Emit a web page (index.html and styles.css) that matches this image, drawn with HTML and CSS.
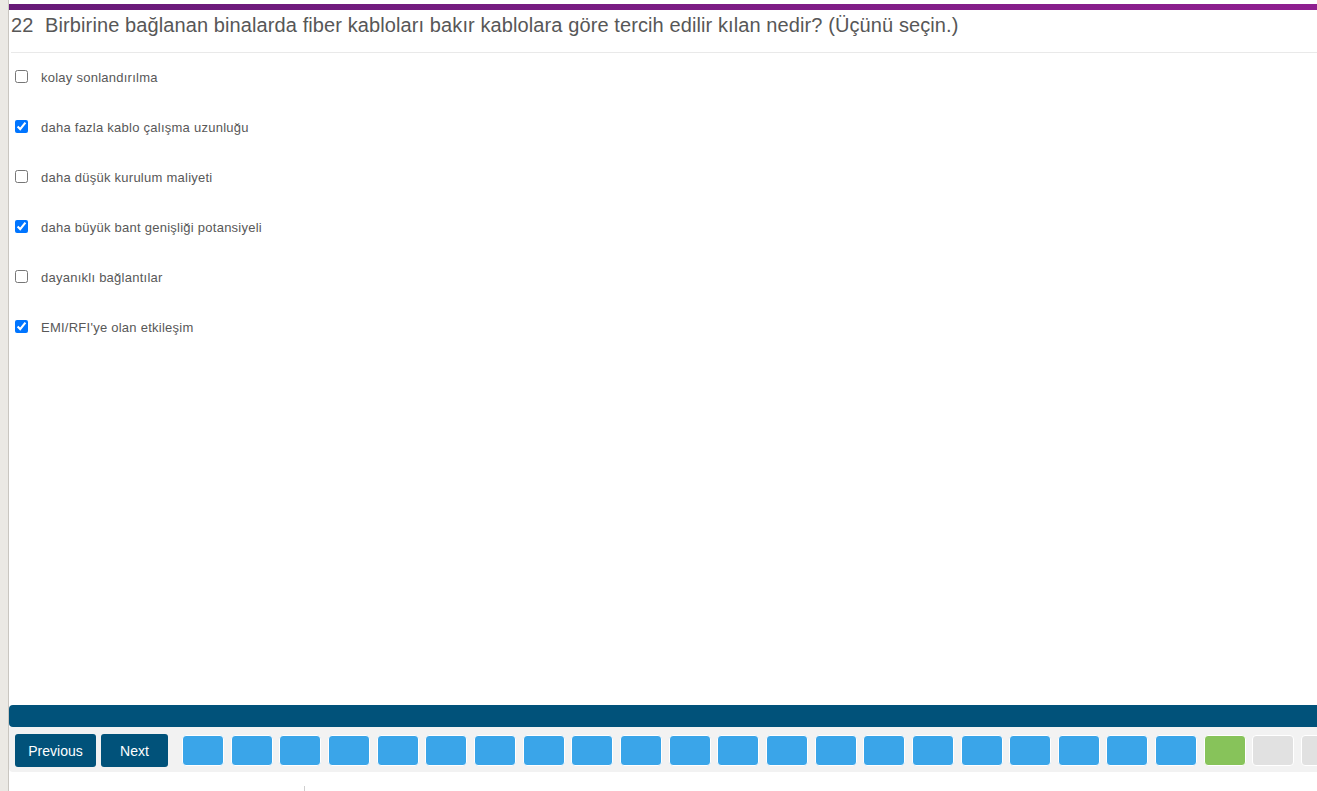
FILE: index.html
```html
<!DOCTYPE html>
<html lang="tr">
<head>
<meta charset="utf-8">
<title>Soru 22</title>
<link rel="stylesheet" href="styles.css">
</head>
<body>
<div class="page">
  <aside class="strip"></aside>
  <main class="main">
    <div class="topbar"></div>
    <div class="question">
      <h1 class="qtitle"><span class="qnum">22</span> Birbirine bağlanan binalarda fiber kabloları bakır kablolara göre tercih edilir kılan nedir? (Üçünü seçin.)</h1>
    </div>
    <div class="options">
      <label class="option"><input type="checkbox"><span class="option-text">kolay sonlandırılma</span></label>
      <label class="option"><input type="checkbox" checked><span class="option-text">daha fazla kablo çalışma uzunluğu</span></label>
      <label class="option"><input type="checkbox"><span class="option-text">daha düşük kurulum maliyeti</span></label>
      <label class="option"><input type="checkbox" checked><span class="option-text">daha büyük bant genişliği potansiyeli</span></label>
      <label class="option"><input type="checkbox"><span class="option-text">dayanıklı bağlantılar</span></label>
      <label class="option"><input type="checkbox" checked><span class="option-text">EMI/RFI'ye olan etkileşim</span></label>
    </div>
    <div class="progress"></div>
    <nav class="nav">
      <button class="nav-btn nav-prev">Previous</button>
      <button class="nav-btn nav-next">Next</button>
      <div class="squares">
        <span class="sq done"></span><span class="sq done"></span><span class="sq done"></span><span class="sq done"></span><span class="sq done"></span><span class="sq done"></span><span class="sq done"></span>
        <span class="sq done"></span><span class="sq done"></span><span class="sq done"></span><span class="sq done"></span><span class="sq done"></span><span class="sq done"></span><span class="sq done"></span>
        <span class="sq done"></span><span class="sq done"></span><span class="sq done"></span><span class="sq done"></span><span class="sq done"></span><span class="sq done"></span><span class="sq done"></span>
        <span class="sq current"></span>
        <span class="sq"></span><span class="sq"></span><span class="sq"></span><span class="sq"></span><span class="sq"></span>
      </div>
    </nav>
    <footer class="footer"><span class="footer-mark"></span></footer>
  </main>
</div>
</body>
</html>
```
FILE: styles.css
```css
html, body {
  margin: 0;
  padding: 0;
  height: 100%;
  background: #ffffff;
}
body {
  font-family: "Liberation Sans", Arial, sans-serif;
  overflow: hidden;
}
.page {
  display: flex;
  height: 100vh;
}
.strip {
  width: 8px;
  flex: 0 0 8px;
  background: #ebe9e4;
  border-right: 1px solid #c9c6c0;
}
.main {
  flex: 1;
  min-width: 0;
  display: flex;
  flex-direction: column;
  overflow: hidden;
}
.topbar {
  margin-top: 4px;
  height: 6px;
  flex: 0 0 6px;
  background: linear-gradient(to right, #671a78, #8f1f90);
}
.question {
  margin-left: 2px;
  border-bottom: 1px solid #e9e9e9;
  padding: 3px 0 15px 0;
}
.qtitle {
  margin: 0;
  font-size: 20px;
  line-height: 24px;
  font-weight: normal;
  color: #575757;
  white-space: nowrap;
  letter-spacing: 0.1px;
}
.qnum {
  margin-right: 6px;
}
.options {
  flex: 1;
  margin-left: 2px;
  padding-top: 14px;
  display: flex;
  flex-direction: column;
}
.option {
  display: flex;
  align-items: center;
  height: 19px;
  margin-bottom: 31px;
  font-size: 13px;
  color: #585858;
}
.option input {
  margin: 3px 3px 3px 4px;
  width: 13px;
  height: 13px;
}
.option-text {
  margin-left: 10px;
  position: relative;
  top: 1px;
  letter-spacing: 0.25px;
}
.progress {
  flex: 0 0 22px;
  height: 22px;
  background: #01527a;
  border-radius: 4px 0 0 4px;
}
.nav {
  flex: 0 0 45px;
  height: 45px;
  background: #f2f2f2;
  border-radius: 0 0 0 4px;
  display: flex;
  align-items: center;
  gap: 5px;
  padding: 2px 0 0 6px;
  box-sizing: border-box;
  overflow: hidden;
  white-space: nowrap;
}
.nav-btn {
  height: 33px;
  border: 0;
  border-radius: 3px;
  background: #01527a;
  color: #ffffff;
  font-family: "Liberation Sans", Arial, sans-serif;
  font-size: 14px;
  padding: 0;
  flex: 0 0 auto;
}
.nav-prev { width: 81px; }
.nav-next { width: 67px; }
.squares {
  display: flex;
  gap: 6.67px;
  margin-left: 9px;
  flex: 0 0 auto;
}
.sq {
  display: block;
  width: 40px;
  height: 29px;
  border: 1px solid #ffffff;
  border-radius: 4px;
  background: #e1e1e1;
}
.sq.done { background: #3aa5e9; }
.sq.current { background: #87c35a; }
.footer {
  flex: 0 0 19px;
  height: 19px;
  padding: 14px 0 0 295px;
  box-sizing: border-box;
}
.footer-mark {
  display: block;
  width: 1px;
  height: 5px;
  background: #cfcfcf;
}
```
